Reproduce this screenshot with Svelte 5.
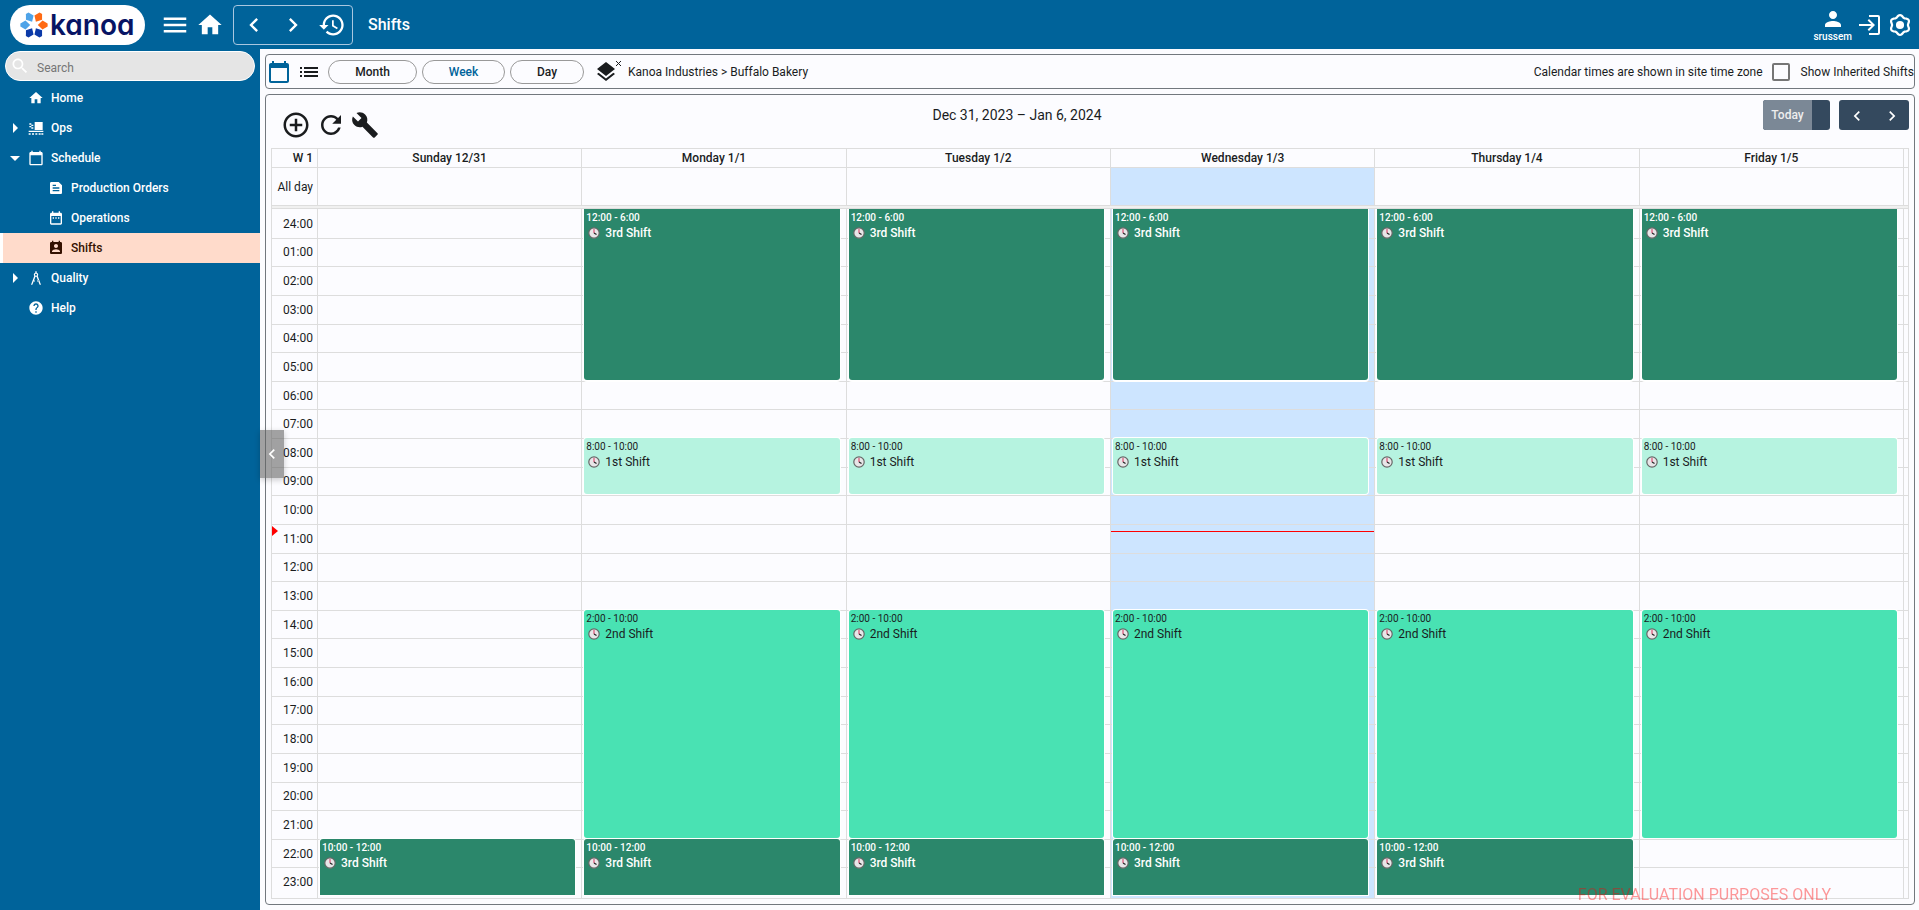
<script>
  let search = '';
  let showInherited = false;
  let currentView = 'Week';

  const views = ['Month', 'Week', 'Day'];

  const icons = {
    menu: 'M3 18h18v-2H3v2zm0-5h18v-2H3v2zm0-7v2h18V6H3z',
    home: 'M10 20v-6h4v6h5v-8h3L12 3 2 12h3v8z',
    left: 'M15.41 7.41L14 6l-6 6 6 6 1.41-1.41L10.83 12z',
    right: 'M10 6L8.59 7.41 13.17 12l-4.58 4.59L10 18l6-6z',
    history:
      'M13 3c-4.97 0-9 4.03-9 9H1l3.89 3.89.07.14L9 12H6c0-3.87 3.13-7 7-7s7 3.13 7 7-3.13 7-7 7c-1.93 0-3.68-.79-4.94-2.06l-1.42 1.42C8.27 19.99 10.51 21 13 21c4.97 0 9-4.03 9-9s-4.03-9-9-9zm-1 5v5l4.28 2.54.72-1.21-3.5-2.08V8H12z',
    person:
      'M12 12c2.21 0 4-1.79 4-4s-1.79-4-4-4-4 1.79-4 4 1.79 4 4 4zm0 2c-2.67 0-8 1.34-8 4v2h16v-2c0-2.66-5.33-4-8-4z',
    login:
      'M11 2h9a2 2 0 0 1 2 2v16a2 2 0 0 1-2 2h-9v-2h9V4h-9zM1 11h12.2L9.6 7.4 11 6l6 6-6 6-1.4-1.4 3.6-3.6H1z',
    search:
      'M15.5 14h-.79l-.28-.27C15.41 12.59 16 11.11 16 9.5 16 5.91 13.09 3 9.5 3S3 5.91 3 9.5 5.91 16 9.5 16c1.61 0 3.09-.59 4.23-1.57l.27.28v.79l5 4.99L20.49 19l-4.99-5zm-6 0C7.01 14 5 11.99 5 9.5S7.01 5 9.5 5 14 7.01 14 9.5 11.99 14 9.5 14z',
    calendar:
      'M20 3h-1V1h-2v2H7V1H5v2H4c-1.1 0-2 .9-2 2v16c0 1.1.9 2 2 2h16c1.1 0 2-.9 2-2V5c0-1.1-.9-2-2-2zm0 18H4V8h16v13z',
    ops: 'M10 3h12v12H10zM2 5h3v2H2zM5 7h3v2H5zM2 9h3v2H2zM5 11h3v2H5zM1 16h22v2H1zM1 20h3v2H1zM6 20h3v2H6zM11 20h3v2h-3zM16 20h3v2h-3zM20 20h3v2h-3z',
    orders:
      'M16 3H5c-1.1 0-2 .9-2 2v14c0 1.1.9 2 2 2h14c1.1 0 2-.9 2-2V8l-5-5zM7 7h5v2H7V7zm10 10H7v-2h10v2zm0-4H7v-2h10v2z',
    operations:
      'M9 11H7v2h2v-2zm4 0h-2v2h2v-2zm4 0h-2v2h2v-2zm2-7h-1V2h-2v2H8V2H6v2H5c-1.11 0-1.99.9-1.99 2L3 20c0 1.1.89 2 2 2h14c1.1 0 2-.9 2-2V6c0-1.1-.9-2-2-2zm0 16H5V9h14v11z',
    shifts:
      'M19 3h-1V1h-2v2H8V1H6v2H5c-1.11 0-2 .9-2 2v14c0 1.1.89 2 2 2h14c1.1 0 2-.9 2-2V5c0-1.1-.9-2-2-2zm-7 3c1.66 0 3 1.34 3 3s-1.34 3-3 3-3-1.34-3-3 1.34-3 3-3zm6 12H6v-1c0-2 4-3.1 6-3.1s6 1.1 6 3.1v1z',
    quality:
      'M11 2h2v2.2a3 3 0 0 1 1.6 4.8L19.500 22H17.500L12.800 10h-1.600L6.500 22H4.500L9.400 9A3 3 0 0 1 11 4.200zM12 5.600a1.400 1.400 0 1 0 .01 0zM8.500 15l2 1.200-.6 1.500-2-1.200zM15.500 15l-2 1.200.6 1.500 2-1.200z',
    help: 'M12 2C6.48 2 2 6.48 2 12s4.48 10 10 10 10-4.48 10-10S17.52 2 12 2zm1 17h-2v-2h2v2zm2.07-7.75l-.9.92C13.45 12.9 13 13.5 13 15h-2v-.5c0-1.1.45-2.1 1.17-2.83l1.24-1.26c.37-.36.59-.86.59-1.41 0-1.1-.9-2-2-2s-2 .9-2 2H8c0-2.21 1.79-4 4-4s4 1.79 4 4c0 .88-.36 1.68-.93 2.25z',
    list: 'M3 13h2v-2H3v2zm0 4h2v-2H3v2zm0-8h2V7H3v2zm4 4h14v-2H7v2zm0 4h14v-2H7v2zM7 7v2h14V7H7z',
    layers:
      'M11.99 18.54l-7.37-5.73L3 14.07l9 7 9-7-1.63-1.27-7.38 5.74zM12 16l7.36-5.73L21 9l-9-7-9 7 1.63 1.27L12 16z',
    add: 'M13 7h-2v4H7v2h4v4h2v-4h4v-2h-4V7zm-1-5C6.48 2 2 6.48 2 12s4.48 10 10 10 10-4.48 10-10S17.52 2 12 2zm0 18c-4.41 0-8-3.59-8-8s3.59-8 8-8 8 3.59 8 8-3.59 8-8 8z',
    refresh:
      'M17.65 6.35C16.2 4.9 14.21 4 12 4c-4.42 0-7.99 3.58-7.99 8s3.57 8 7.99 8c3.73 0 6.84-2.55 7.73-6h-2.08c-.82 2.33-3.04 4-5.65 4-3.31 0-6-2.69-6-6s2.69-6 6-6c1.66 0 3.14.69 4.22 1.78L13 11h7V4l-2.35 2.35z',
    build:
      'M22.7 19l-9.1-9.1c.9-2.3.4-5-1.5-6.9-2-2-5-2.4-7.4-1.3L9 6 6 9 1.6 4.7C.4 7.1.9 10.1 2.9 12.1c1.9 1.9 4.6 2.4 6.9 1.5l9.1 9.1c.4.4 1 .4 1.4 0l2.3-2.3c.5-.4.5-1.1.1-1.4z',
  };

  // outline of the settings cog, six rounded teeth with one at the top
  const cog = Array.from({ length: 72 }, (_, i) => {
    const a = (i / 72) * Math.PI * 2;
    const r = 9.7 + 1.1 * Math.cos(6 * a);
    return `${(r * Math.sin(a)).toFixed(2)},${(-r * Math.cos(a)).toFixed(2)}`;
  }).join(' ');

  const navItems = [
    { label: 'Home', icon: 'home' },
    { label: 'Ops', icon: 'ops', arrow: 'closed' },
    { label: 'Schedule', icon: 'calendar', arrow: 'open' },
    { label: 'Production Orders', icon: 'orders', child: true },
    { label: 'Operations', icon: 'operations', child: true },
    { label: 'Shifts', icon: 'shifts', child: true, active: true },
    { label: 'Quality', icon: 'quality', arrow: 'closed' },
    { label: 'Help', icon: 'help' },
  ];

  const petals = [
    { angle: 0, color: '#ff6a13' },
    { angle: 60, color: '#0b3aa8' },
    { angle: 120, color: '#0b3aa8' },
    { angle: 180, color: '#4ea3e8' },
    { angle: 240, color: '#4ea3e8' },
    { angle: 300, color: '#ff6a13' },
  ];

  const hours = Array.from({ length: 24 }, (_, h) =>
    h === 0 ? '24:00' : String(h).padStart(2, '0') + ':00'
  );

  const night = { start: 0, end: 6, time: '12:00 - 6:00', name: '3rd Shift', type: 'third', cont: true };
  const first = { start: 8, end: 10, time: '8:00 - 10:00', name: '1st Shift', type: 'first' };
  const second = { start: 14, end: 22, time: '2:00 - 10:00', name: '2nd Shift', type: 'second' };
  const late = { start: 22, end: 24, time: '10:00 - 12:00', name: '3rd Shift', type: 'third', open: true };

  const days = [
    { label: 'Sunday 12/31', events: [late] },
    { label: 'Monday 1/1', events: [night, first, second, late] },
    { label: 'Tuesday 1/2', events: [night, first, second, late] },
    { label: 'Wednesday 1/3', today: true, events: [night, first, second, late] },
    { label: 'Thursday 1/4', events: [night, first, second, late] },
    { label: 'Friday 1/5', events: [night, first, second] },
    { label: '', events: [] },
  ];

  // hours since midnight
  const now = 11.22;
  const nowTop = (now / 24) * 100;
</script>

{#snippet icon(name, size)}
  <svg width={size} height={size} viewBox="0 0 24 24" fill="currentColor" aria-hidden="true">
    <path d={icons[name]} />
  </svg>
{/snippet}

<div class="app">
  <header class="topbar">
    <a href="#home" class="logo">
      <svg width="28" height="28" viewBox="-14 -14 28 28" aria-hidden="true">
        {#each petals as petal}
          <polygon
            points="3.8,0 8.5,-4.4 13.6,-1.5 13.6,1.5 8.5,4.4"
            fill={petal.color}
            transform="rotate({petal.angle})"
          />
        {/each}
      </svg>
      <span>kanoa</span>
    </a>
    <button class="icon-btn" aria-label="Menu">{@render icon('menu', 30)}</button>
    <button class="icon-btn" aria-label="Home">{@render icon('home', 28)}</button>
    <div class="history">
      <button aria-label="Back">{@render icon('left', 28)}</button>
      <button aria-label="Forward">{@render icon('right', 28)}</button>
      <button aria-label="History">{@render icon('history', 28)}</button>
    </div>
    <h1>Shifts</h1>
    <div class="account">
      <button class="user">
        {@render icon('person', 24)}
        <span>srussem</span>
      </button>
      <button class="icon-btn" aria-label="Log out">{@render icon('login', 24)}</button>
      <button class="icon-btn" aria-label="Settings">
        <svg width="24" height="24" viewBox="-13 -13 26 26" aria-hidden="true">
          <polygon points={cog} fill="none" stroke="currentColor" stroke-width="2.4" />
          <circle r="4.4" fill="currentColor" />
        </svg>
      </button>
    </div>
  </header>

  <div class="content">
    <aside class="sidebar">
      <label class="search">
        {@render icon('search', 20)}
        <input type="text" placeholder="Search" aria-label="Search" bind:value={search} />
      </label>
      <nav>
        {#each navItems as item}
          <a href="#{item.label}" class="nav-item" class:child={item.child} class:active={item.active}>
            <span class="arrow {item.arrow || ''}"></span>
            {@render icon(item.icon, 16)}
            <span>{item.label}</span>
          </a>
        {/each}
      </nav>
      <button class="collapse" aria-label="Collapse menu">{@render icon('left', 20)}</button>
    </aside>

    <main>
      <section class="toolbar">
        <button class="icon-btn blue" aria-label="Calendar view">{@render icon('calendar', 24)}</button>
        <button class="icon-btn" aria-label="List view">{@render icon('list', 24)}</button>
        <div class="views">
          {#each views as view}
            <button
              class="pill {view.toLowerCase()}"
              class:selected={view === currentView}
              on:click={() => (currentView = view)}>{view}</button
            >
          {/each}
        </div>
        <button class="icon-btn layers" aria-label="Clear location">
          {@render icon('layers', 24)}
          <svg width="7" height="7" viewBox="0 0 7 7" aria-hidden="true">
            <path d="M1 1l5 5M6 1L1 6" stroke="currentColor" fill="none" />
          </svg>
        </button>
        <span>Kanoa Industries &gt; Buffalo Bakery</span>
        <span class="zone">Calendar times are shown in site time zone</span>
        <label class="inherited">
          <input type="checkbox" bind:checked={showInherited} />
          Show Inherited Shifts
        </label>
      </section>

      <section class="calendar">
        <div class="calendar-bar">
          <div class="actions">
            <button class="icon-btn" aria-label="Add shift">{@render icon('add', 30)}</button>
            <button class="icon-btn" aria-label="Refresh">{@render icon('refresh', 30)}</button>
            <button class="icon-btn" aria-label="Configure">{@render icon('build', 28)}</button>
          </div>
          <h2>Dec 31, 2023 – Jan 6, 2024</h2>
          <div class="paging">
            <div class="group"><button class="today-btn" disabled>Today</button></div>
            <div class="group">
              <button aria-label="Previous week">{@render icon('left', 20)}</button>
              <button aria-label="Next week">{@render icon('right', 20)}</button>
            </div>
          </div>
        </div>

        <div class="timetable">
          <div class="row head">
            <div class="axis">W 1</div>
            {#each days as day}
              <div class="cell">{day.label}</div>
            {/each}
          </div>
          <div class="row all-day">
            <div class="axis">All day</div>
            {#each days as day}
              <div class="cell" class:today={day.today}></div>
            {/each}
          </div>
          <div class="divider"></div>
          <div class="row body">
            <div class="axis slots">
              {#each hours as hour}
                <div class="slot">{hour}</div>
              {/each}
              <span class="now-arrow" style="top: {nowTop}%"></span>
            </div>
            {#each days as day}
              <div class="cell slots" class:today={day.today}>
                {#each hours as _, h}
                  <div class="slot" style="grid-row: {h + 1}"></div>
                {/each}
                {#each day.events as event}
                  <div
                    class="event {event.type}"
                    class:cont={event.cont}
                    class:open={event.open}
                    style="grid-row: {event.start + 1} / {event.end + 1}"
                  >
                    <div class="time">{event.time}</div>
                    <div class="name">
                      <svg width="12" height="12" viewBox="0 0 12 12" aria-hidden="true">
                        <circle cx="6" cy="6" r="5.2" fill="#e8e6e8" stroke="#666" stroke-width="1.2" />
                        <path d="M6 2v4" stroke="#d8345f" fill="none" />
                        <path d="M6 6l2.5 1.5" stroke="#222" stroke-width="1.2" fill="none" />
                      </svg>
                      <span>{event.name}</span>
                    </div>
                  </div>
                {/each}
                {#if day.today}
                  <span class="now-line" style="top: {nowTop}%"></span>
                {/if}
              </div>
            {/each}
          </div>
        </div>
      </section>
    </main>
  </div>
  <div class="watermark">FOR EVALUATION PURPOSES ONLY</div>
</div>

<style>
  :global(body) {
    margin: 0;
  }

  .app {
    display: flex;
    flex-direction: column;
    min-height: 100vh;
    background: #fcfcff;
    color: #1a1c1e;
    font-family: Roboto, sans-serif;
    font-size: 12px;
    line-height: 16px;
  }

  .app *,
  .app {
    box-sizing: border-box;
  }

  button {
    padding: 0;
    border: none;
    background: none;
    color: inherit;
    font: inherit;
    cursor: pointer;
  }

  a {
    color: inherit;
    text-decoration: none;
  }

  svg {
    display: block;
    flex-shrink: 0;
  }

  .icon-btn {
    display: flex;
  }

  .topbar {
    display: flex;
    align-items: center;
    height: 49px;
    padding: 0 7px 0 10px;
    background: #00639a;
    color: #fff;
  }

  .logo {
    display: flex;
    align-items: center;
    gap: 2px;
    width: 135px;
    height: 40px;
    margin-right: 15px;
    padding-left: 10px;
    border-radius: 20px;
    background: #fff;
    color: #071464;
    font-family: Inter, sans-serif;
    font-size: 28px;
    font-weight: 600;
    line-height: 36px;
    font-feature-settings: 'cv11';
  }

  .topbar > .icon-btn {
    margin-right: 6px;
  }

  .history {
    display: flex;
    width: 120px;
    height: 40px;
    margin-left: 3px;
    border: 1px solid #a9c7e0;
    border-radius: 4px;
  }

  .history button {
    display: flex;
    flex: 1;
    align-items: center;
    justify-content: center;
  }

  h1 {
    margin: 0 0 0 15px;
    font-size: 16px;
    font-weight: 500;
    line-height: 20px;
  }

  .account {
    display: flex;
    align-items: center;
    gap: 6px;
    margin-left: auto;
  }

  .user {
    display: flex;
    flex-direction: column;
    align-items: center;
    font-size: 10px;
    font-weight: 500;
    line-height: 12px;
  }

  .content {
    display: flex;
    flex: 1;
  }

  .sidebar {
    position: relative;
    flex: none;
    width: 260px;
    padding-top: 2px;
    background: #00639a;
    color: #fff;
  }

  .search {
    display: flex;
    align-items: center;
    gap: 3px;
    height: 30px;
    margin: 0 5px 2px;
    padding-left: 4px;
    border: 1px solid #fff;
    border-radius: 15px;
    background: #e5e5e5;
  }

  .search input {
    flex: 1;
    min-width: 0;
    padding: 4px 4px 0;
    border: none;
    outline: none;
    background: none;
    font: inherit;
  }

  .search input::placeholder {
    color: #757575;
  }

  .nav-item {
    display: flex;
    align-items: center;
    height: 30px;
    font-weight: 500;
  }

  .nav-item svg {
    margin-right: 7px;
  }

  .nav-item.child {
    padding-left: 20px;
  }

  .nav-item.active {
    padding-left: 17px;
    border-left: 3px solid #fff;
    background: #ffdbcb;
    color: #341100;
  }

  .arrow {
    display: flex;
    align-items: center;
    justify-content: center;
    width: 28px;
    padding-left: 2px;
  }

  .arrow.closed::before {
    content: '';
    border: 5px solid transparent;
    border-left-color: #fff;
    border-right: none;
  }

  .arrow.open::before {
    content: '';
    border: 5px solid transparent;
    border-top-color: #fff;
    border-bottom: none;
  }

  .collapse {
    position: absolute;
    top: 381px;
    left: 100%;
    z-index: 2;
    display: flex;
    align-items: center;
    justify-content: center;
    width: 24px;
    height: 48px;
    background: rgba(100, 100, 100, 0.6);
    box-shadow: 0 2px 6px rgba(0, 0, 0, 0.2);
    color: #fff;
  }

  main {
    display: flex;
    flex: 1;
    flex-direction: column;
    gap: 5px;
    min-width: 0;
    padding: 5px 4px 5px 5px;
  }

  .toolbar {
    display: flex;
    align-items: center;
    height: 35px;
    padding-left: 1px;
    border: 1px solid #72787e;
    border-radius: 4px;
    white-space: nowrap;
  }

  .toolbar > .icon-btn {
    margin-right: 6px;
  }

  .blue {
    color: #00639a;
  }

  .views {
    display: flex;
    gap: 5px;
    margin-left: 1px;
  }

  .pill {
    height: 24px;
    border: 1px solid #999;
    border-radius: 12px;
    font-weight: 500;
  }

  .pill.selected {
    color: #00639a;
  }

  .pill.month {
    width: 89px;
  }

  .pill.week {
    width: 83px;
  }

  .pill.day {
    width: 74px;
  }

  .layers {
    margin-left: 10px;
  }

  .layers svg:last-child {
    margin-left: -3px;
  }

  .zone {
    margin-left: auto;
  }

  .inherited {
    display: flex;
    align-items: center;
    gap: 11px;
    margin-left: 9px;
  }

  .inherited input {
    appearance: none;
    width: 18px;
    height: 18px;
    margin: 0;
    border: 2px solid #767676;
    border-radius: 2px;
  }

  .inherited input:checked {
    background: #00639a;
  }

  .calendar {
    display: flex;
    flex: 1;
    flex-direction: column;
    padding: 0 5px 5px;
    border: 1px solid #72787e;
    border-radius: 4px;
  }

  .calendar-bar {
    display: grid;
    grid-template-columns: 1fr auto;
    height: 53px;
    padding-top: 5px;
  }

  .actions {
    display: flex;
    grid-area: 1 / 1;
    align-items: center;
    justify-self: start;
    gap: 5px;
    padding: 1px 0 0 10px;
  }

  h2 {
    grid-area: 1 / 1;
    justify-self: center;
    align-self: start;
    margin: 7px 0;
    font-size: 14px;
    font-weight: 400;
    line-height: 16px;
  }

  .paging {
    display: flex;
    gap: 9px;
    height: 30px;
  }

  .group {
    display: flex;
    padding-right: 18px;
    border-radius: 3px;
    background: #34495e;
    color: #fff;
    overflow: hidden;
  }

  .group:last-child {
    padding: 0;
  }

  .group button {
    display: flex;
    align-items: center;
    justify-content: center;
    width: 35px;
    padding-top: 2px;
  }

  .group .today-btn {
    width: 49px;
    padding: 0;
    background: #7b8896;
    color: #eee;
    font-weight: 500;
  }

  .timetable {
    display: flex;
    flex: 1;
    flex-direction: column;
    border: 1px solid #ddd;
  }

  .row {
    display: grid;
    grid-template-columns: 46px repeat(6, 1fr) 4px;
  }

  .axis,
  .cell {
    border-right: 1px solid #ddd;
  }

  .cell:last-child {
    border-right: none;
  }

  .axis {
    padding-right: 4px;
    text-align: right;
  }

  .head {
    height: 19px;
    border-bottom: 1px solid #ddd;
    font-weight: 500;
    line-height: 18px;
  }

  .head .cell {
    text-align: center;
  }

  .all-day {
    height: 37px;
    line-height: 38px;
  }

  .divider {
    height: 4px;
    border: solid #ddd;
    border-width: 1px 0;
    background: #f0f0f0;
  }

  .body {
    flex: 1;
  }

  .slots {
    position: relative;
    display: grid;
    grid-template-rows: repeat(24, minmax(20px, 1fr));
    padding-bottom: 2px;
  }

  .slot {
    display: flex;
    grid-column: 1;
    align-items: center;
    justify-content: flex-end;
    border-top: 1px solid #ddd;
  }

  .slot:first-child {
    border-top-color: transparent;
  }

  .axis.slots {
    padding-right: 0;
  }

  .axis .slot {
    padding-right: 4px;
  }

  .today {
    background: #cde5ff;
  }

  .event {
    z-index: 1;
    grid-column: 1;
    min-height: 0;
    margin: 0 6px 1px 2px;
    padding: 2px;
    border-radius: 3px;
    box-shadow: 0 0 0 1px #fff;
    color: #1a1c1e;
    overflow: hidden;
  }

  .third {
    background: #2b876b;
    color: #fff;
    font-weight: 500;
  }

  .first {
    background: #b6f3e0;
  }

  .second {
    background: #49e2b3;
  }

  .cont {
    border-top-left-radius: 0;
    border-top-right-radius: 0;
    box-shadow: 0 1px 0 1px #fff;
  }

  .open {
    border-bottom-left-radius: 0;
    border-bottom-right-radius: 0;
  }

  .time {
    font-size: 10px;
    line-height: 13px;
  }

  .name {
    display: flex;
    align-items: center;
    gap: 5px;
    padding: 1px 2px;
  }

  .now-line {
    position: absolute;
    right: 0;
    left: 0;
    z-index: 2;
    border-top: 1px solid red;
  }

  .now-arrow {
    position: absolute;
    left: 0;
    margin-top: -5px;
    border: 5px solid transparent;
    border-left: 6px solid red;
    border-right: none;
  }

  .watermark {
    position: fixed;
    right: 88px;
    bottom: 5px;
    z-index: 3;
    color: rgba(255, 0, 0, 0.4);
    font-size: 16px;
    line-height: 20px;
    pointer-events: none;
  }
</style>
